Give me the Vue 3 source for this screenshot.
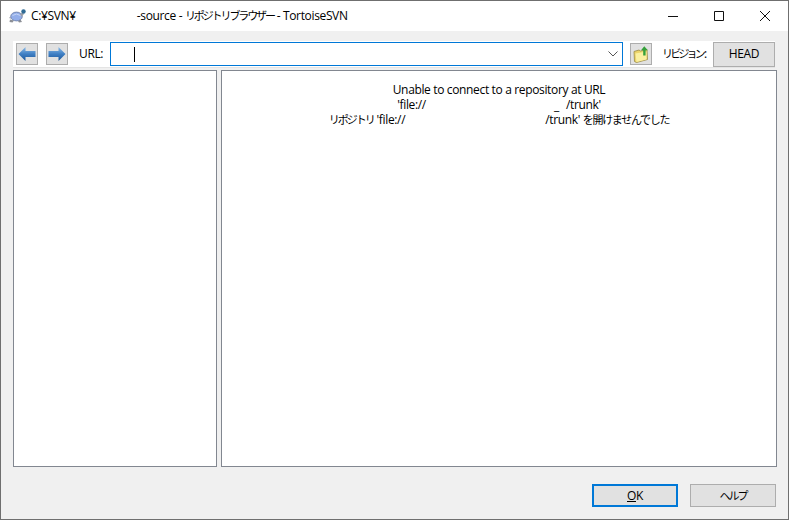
<template>
  <div class="win">
    <header class="titlebar">
      <svg class="appicon" width="18" height="16" viewBox="0 0 18 16">
        <path d="M1 11.500l-.5 2.500 3 .5 1.500-2zM9 13l1 1.500 3-.5-1.500-2.500z" fill="#8d9096"/>
        <path d="M1.500 9L0 9.800l1.500 1z" fill="#8d9096"/>
        <ellipse cx="7.500" cy="8.500" rx="5.800" ry="4.400" fill="#93aeea" stroke="#66789f" stroke-width=".8"/>
        <path d="M3.500 7.500q4-3 8 0" stroke="#c7d6f5" fill="none"/>
        <path d="M11 6.500l2-2 2 1.500-2.200 2.500z" fill="#9a9ea6"/>
        <circle cx="14.500" cy="3.500" r="2.200" fill="#2f6a94"/>
      </svg>
      <span class="title">C:¥SVN¥<i class="gap-title"></i>-source - <span class="kata">リポジトリブラウザー</span> - TortoiseSVN</span>
      <div class="caption">
        <svg width="46" height="30" viewBox="0 0 46 30"><path d="M18 15.500h10" stroke="#111" fill="none"/></svg>
        <svg width="46" height="30" viewBox="0 0 46 30"><path d="M18.500 10.500h9v9h-9z" stroke="#111" fill="none"/></svg>
        <svg width="46" height="30" viewBox="0 0 46 30"><path d="M18 10l10 10M28 10l-10 10" stroke="#111" fill="none"/></svg>
      </div>
    </header>

    <main class="body">
      <div class="toolbar">
        <button class="tool">
          <svg width="20" height="16" viewBox="0 0 20 16"><defs><linearGradient id="ar" x1="0" y1="0" x2="0" y2="1"><stop offset="0" stop-color="#8dbce8"/><stop offset=".5" stop-color="#3f7fc4"/><stop offset="1" stop-color="#1d5798"/></linearGradient></defs><path d="M1.500 8l7-7v4h10v6h-10v4z" fill="url(#ar)"/></svg>
        </button>
        <button class="tool second">
          <svg width="20" height="16" viewBox="0 0 20 16"><path d="M18.500 8l-7-7v4h-10v6h10v4z" fill="url(#ar)"/></svg>
        </button>
        <label class="urllabel">URL:</label>
        <div class="urlbox">
          <span class="caret"></span>
          <svg class="chev" width="10" height="6" viewBox="0 0 10 6"><path d="M.5.500L5 5 9.500.500" stroke="#555" fill="none"/></svg>
        </div>
        <button class="tool folder">
          <svg width="18" height="18" viewBox="0 0 18 18">
            <path d="M2 6.500l5-1.500 1.500 1 6.500-1.500.5 10-11 3-2-1z" fill="#ecd46a" stroke="#9a8a45" stroke-width=".8"/>
            <path d="M3.500 8.500l11-2v8l-10 2.500z" fill="#fbf0a0"/>
            <path d="M11.200 10.500V5.200H9L12.300 1.200 15.800 5.200h-2.200v5.300z" fill="#35a03a"/>
          </svg>
        </button>
        <span class="revlabel"><span class="kata tight">リビジョン</span>:</span>
        <button class="head">HEAD</button>
      </div>

      <div class="panes">
        <section class="pane left"></section>
        <section class="pane right">
          <p>Unable to connect to a repository at URL</p>
          <p class="l2">'file://<i class="g1"></i><span class="under">_</span><i class="g2"></i>/trunk'</p>
          <p class="l3"><span class="kata">リポジトリ</span> 'file://<i class="g3"></i>/trunk' <span class="hira">を開けませんでした</span></p>
        </section>
      </div>

      <footer class="actions">
        <button class="act primary"><u>O</u>K</button>
        <button class="act"><span class="kata">ヘルプ</span></button>
      </footer>
    </main>
  </div>
</template>

<script setup>
</script>

<style>
html, body { margin: 0; overflow: hidden; }
</style>

<style scoped>
.win {
  width: 789px;
  height: 520px;
  box-sizing: border-box;
  display: flex;
  flex-direction: column;
  border: 1px solid #6f6f6f;
  background: #f0f0f0;
  color: #000;
  font: 12px/16px "Open Sans", "Noto Sans CJK JP", sans-serif;
  letter-spacing: -0.35px;
}
button { font: inherit; letter-spacing: inherit; color: inherit; padding: 0; }
i { display: inline-block; }
.kata { font-size: 11px; letter-spacing: -2px; }
.title .kata { letter-spacing: -2.1px; }
.revlabel .tight { letter-spacing: -2.8px; margin-right: 1px; }
.hira { font-size: 11px; letter-spacing: -1.3px; }
.titlebar {
  height: 30px;
  flex: none;
  background: #fff;
  display: flex;
  align-items: center;
  padding-left: 8px;
}
.appicon { flex: none; }
.title { margin-left: 4px; flex: 1; white-space: nowrap; }
.gap-title { width: 61px; }
.caption { display: flex; flex: none; }
.caption svg { display: block; }
.body {
  flex: 1;
  display: flex;
  flex-direction: column;
  padding: 10px 11px 12px 12px;
  min-height: 0;
}
.toolbar {
  height: 27px;
  flex: none;
  margin-right: 2px;
  background: #fff;
  border-bottom: 1px solid #e4e4e4;
  box-sizing: border-box;
  display: flex;
  align-items: center;
  padding-left: 3px;
}
.tool {
  width: 22px;
  height: 22px;
  flex: none;
  box-sizing: border-box;
  border: 1px solid #adadad;
  background: #e1e1e1;
  display: flex;
  align-items: center;
  justify-content: center;
}
.second { margin-left: 8px; }
.urllabel { margin-left: 11px; width: 31px; flex: none; }
.urlbox {
  width: 513px;
  height: 24px;
  box-sizing: border-box;
  border: 1px solid #0078d7;
  background: #fff;
  flex: none;
  display: flex;
  align-items: center;
  justify-content: space-between;
  padding: 0 4px 0 23px;
}
.caret { width: 1px; height: 15px; background: #000; }
.folder { margin-left: 7px; }
.revlabel { margin-left: 10px; width: 51px; flex: none; white-space: nowrap; }
.head {
  width: 62px;
  height: 25px;
  flex: none;
  box-sizing: border-box;
  border: 1px solid #adadad;
  background: #e1e1e1;
}
.panes {
  flex: 1;
  display: flex;
  gap: 4px;
  margin-top: 2px;
  min-height: 0;
}
.pane {
  box-sizing: border-box;
  border: 1px solid #828790;
  background: #fff;
}
.left { width: 204px; flex: none; }
.right { flex: 1; padding-top: 11px; text-align: center; }
.right p { margin: 0; height: 15px; line-height: 15px; white-space: nowrap; }
.under { display: inline-block; width: 4px; transform: translateY(1px); }
.g1 { width: 128px; }
.g2 { width: 8px; }
.g3 { width: 140px; }
.actions {
  flex: none;
  display: flex;
  justify-content: flex-end;
  gap: 12px;
  padding: 17px 1px 0 0;
}
.act {
  width: 86px;
  height: 23px;
  box-sizing: border-box;
  border: 1px solid #adadad;
  background: #e1e1e1;
}
.primary { border: 2px solid #0078d7; }
</style>
